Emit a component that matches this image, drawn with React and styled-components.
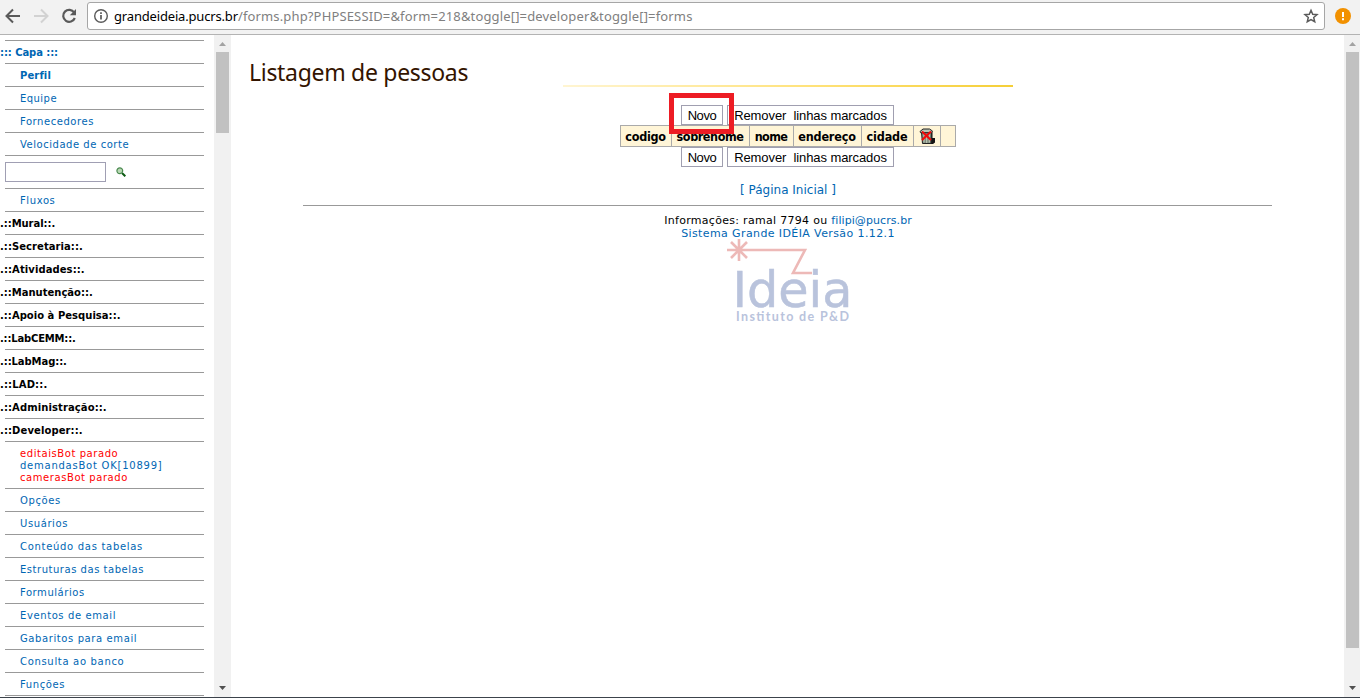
import React from "react";
import styled, { createGlobalStyle } from "styled-components";

const Global = createGlobalStyle`
  * { box-sizing: border-box; }
  html, body, #root { margin: 0; height: 100%; }
  body { overflow: hidden; background: #fff; color: #000; font-family: "DejaVu Sans", sans-serif; }
`;
const Page = styled.div`height: 698px; display: flex; flex-direction: column; border-bottom: 1px solid #3c434b;`;
const Toolbar = styled.header`
  height: 35px; flex: none; display: flex; align-items: center; background: #f2f2f2;
  border-bottom: 1px solid #b3b3b3; padding: 0 8px 2px 3px;
`;
const NavIcon = styled.svg`width: 20px; height: 20px; margin-right: 8px; flex: none; fill: none; stroke: ${(p) => p.$color || "#5a5a5a"}; stroke-width: 2;`;
const Badge = styled.svg`width: ${(p) => p.$s}px; height: ${(p) => p.$s}px; flex: none;`;
const Address = styled.div`
  width: 1238px; height: 28px; margin-right: 10px; display: flex; align-items: center; flex: none;
  border: 1px solid #a6a6a6; border-radius: 3px; background: #fff; padding: 0 5px 0 5px; white-space: pre;
`;
const Url = styled.span`
  flex: 1; margin-left: 5px; color: #808080; font: 13px/20px "Noto Sans", sans-serif; letter-spacing: 0.15px;
`;
const Host = styled.span`color: #000; letter-spacing: -0.17px;`;
const Frames = styled.div`flex: 1; min-height: 0; display: flex;`;
const Sidebar = styled.nav`width: 214px; overflow: hidden; padding: 5px 10px 0 5px;`;
const Item = styled.div`
  height: ${(p) => p.$h || 23}px; display: flex; flex-direction: column; justify-content: center;
  border-bottom: 1px solid #999; padding: 2px 0 0 ${(p) => (p.$root ? 0 : 15)}px;
  &:first-child { border-top: 1px solid #999; height: 24px; }
`;
const Label = styled.span`
  display: block; width: max-content; white-space: pre; font-size: 10px; line-height: 12px;
  margin-left: ${(p) => (p.$root ? -5 : 0)}px; font-weight: ${(p) => (p.$bold ? 700 : 400)};
  color: ${(p) => p.$color || "#0066b3"}; letter-spacing: ${(p) => p.$track || 0}px;
`;
const SearchRow = styled.div`height: 33px; display: flex; align-items: center; gap: 10px; border-bottom: 1px solid #999;`;
const SearchField = styled.input`width: 101px; height: 20px; border: 1px solid #a09fb3; background: #fff; outline: 0;`;
const Track = styled.div`
  width: ${(p) => p.$w}px; flex: none; background: #f1f1f1; display: flex; flex-direction: column; align-items: center;
  padding: 7px 0 7px; svg { flex: none; }
`;
const Thumb = styled.div`width: 13px; height: ${(p) => p.$h}px; margin: 6px 0 auto; background: #c1c1c1;`;
const Main = styled.main`flex: 1; display: flex; flex-direction: column; align-items: center;`;
const Title = styled.h1`
  align-self: flex-start; margin: 21px 0 0 18px; color: #331400; font: 400 23px/32px "Noto Sans", sans-serif;
  height: 29px; white-space: pre; letter-spacing: -0.3px;
`;
const Accent = styled.div`width: 450px; height: 2px; background: linear-gradient(90deg, #fff5d2, #ffe27a 55%, #f5cf38);`;
const Actions = styled.div`height: 20px; display: flex; gap: 4px; margin-top: ${(p) => p.$top || 0}px; position: relative;`;
const Button = styled.button`
  width: ${(p) => p.$w}px; height: 20px; padding: 2px 0 0; border: 1px solid #a09fb0; background: #fff; white-space: pre;
  font: 13px/16px "Liberation Sans", sans-serif; color: #000; letter-spacing: ${(p) => p.$track}px;
`;
const Highlight = styled.div`position: absolute; z-index: 2; left: -12px; top: -12px; width: 65px; height: 41px; border: 5px solid #ed1c24;`;
const Grid = styled.div`display: flex; height: 22px; border: solid #aaa; border-width: 1px 0 1px 1px;`;
const Cell = styled.div`
  width: ${(p) => p.$w}px; border-right: 1px solid #aaa; background: #fff5d7; display: flex; align-items: center; justify-content: center;
  padding-top: ${(p) => (p.$icon ? 0 : 1)}px;
  font: bold 12.5px/19px "DejaVu Sans Condensed", "DejaVu Sans", sans-serif; letter-spacing: ${(p) => p.$track || 0}px;
`;
const Home = styled.a`margin: 15px 0 0 1px; font-size: 12px; line-height: 17px; color: #0066b3;`;
const Rule = styled.div`width: 969px; height: 1px; margin: 6px 0 8px; background: #999;`;
const Info = styled.div`margin-left: 1px; font-size: 11px; line-height: 13px; white-space: pre; color: ${(p) => p.$color || "#000"}; letter-spacing: ${(p) => p.$track || 0}px;`;
const Link = styled.a`color: #0066b3; letter-spacing: 0.08px;`;
const Logo = styled.svg`width: 127px; height: 88px; margin-top: -3px;`;

const Arrow = ({ down }) => (
  <svg width="7" height="4" viewBox="0 0 7 4"><path d={down ? "M0 0h7L3.500 4z" : "M0 4h7L3.500 0z"} fill={down ? "#505050" : "#a3a3a3"} /></svg>
);
const Scrollbar = ({ w, h }) => <Track $w={w}><Arrow /><Thumb $h={h} /><Arrow down /></Track>;

const Trash = () => (
  <Badge $s={18} viewBox="0 0 18 18">
    <path d="M12 5h2.500v6H17v4.500l-2 1.500H6l6-2z" fill="#151515" />
    <path d="M3.500 5.500h10L13 16.500H4.500z" fill="#7f8b7b" stroke="#222" />
    <path d="M2 4.500 5 2h6.500l3 2-1 1.700H2.500z" fill="#b9c3b2" stroke="#222" />
    <path d="M6 7v8.500M8.700 7v9M11.300 7v8.500" stroke="#c3ccbc" />
    <path d="M4 4.500l9 8.500M13 4.500l-9 8.500" stroke="#f00b0b" strokeWidth="2.100" />
  </Badge>
);

const people = [["codigo", 51, -0.3], ["sobrenome", 78, -0.43], ["nome", 44, -0.6], ["endereço", 68, -0.17], ["cidade", 52, -0.12]];
const top = [["Equipe", 0.45], ["Fornecedores", 0.55], ["Velocidade de corte", 0.53]];
const sections = [
  ["Mural", -0.05], ["Secretaria", 0.06], ["Atividades", 0.09], ["Manutenção", 0], ["Apoio à Pesquisa", 0.03],
  ["LabCEMM", -0.18], ["LabMag", -0.08], ["LAD", 0.15], ["Administração", 0.1], ["Developer", 0.1],
];
const tools = [
  ["Opções", 0.6], ["Usuários", 0.6], ["Conteúdo das tabelas", 0.7], ["Estruturas das tabelas", 0.53], ["Formulários", 0.55],
  ["Eventos de email", 0.6], ["Gabaritos para email", 0.6], ["Consulta ao banco", 0.68], ["Funções", 0.6],
];

export default function App() {
  return (
    <Page>
      <Global />
      <Toolbar>
        <NavIcon viewBox="0 0 20 20"><path d="M17 10H4M10 3.500 3.500 10l6.500 6.500" /></NavIcon>
        <NavIcon viewBox="0 0 20 20" $color="#d2d2d2"><path d="M3 10h13M10 3.500l6.500 6.500-6.500 6.500" /></NavIcon>
        <NavIcon viewBox="0 0 20 20"><path d="M15.200 6.500A6 6 0 1 0 15.800 12" strokeWidth="2.200" /><path d="M17 3v6.200h-6.200z" fill="#5a5a5a" stroke="none" /></NavIcon>
        <Address>
          <Badge $s={16} viewBox="0 0 16 16"><circle cx="8" cy="8" r="6.300" fill="none" stroke="#5a5a5a" strokeWidth="1.400" /><path d="M8 7v4.500M8 4.300v1.700" stroke="#5a5a5a" strokeWidth="1.700" /></Badge>
          <Url><Host>grandeideia.pucrs.br</Host>/forms.php?PHPSESSID=&amp;form=218&amp;toggle[]=developer&amp;toggle[]=forms</Url>
          <Badge $s={16} viewBox="0 0 16 16"><path d="M8 2.300l1.700 4 4.300.4-3.300 2.800 1 4.200L8 11.500l-3.700 2.200 1-4.200L2 6.700l4.300-.4z" fill="none" stroke="#5a5a5a" strokeWidth="1.500" /></Badge>
        </Address>
        <Badge $s={16} viewBox="0 0 16 16"><circle cx="8" cy="8" r="8" fill="#f29100" /><path d="M8 4v5M8 10.200v2" stroke="#fff" strokeWidth="2" /></Badge>
      </Toolbar>
      <Frames>
        <Sidebar>
          <Item $root><Label $root $bold $track={-0.08}>::: Capa :::</Label></Item>
          <Item><Label $bold $track={0.12}>Perfil</Label></Item>
          {top.map(([t, k]) => <Item key={t}><Label $track={k}>{t}</Label></Item>)}
          <SearchRow>
            <SearchField />
            <Badge $s={10} viewBox="0 0 10 10"><path d="M6 6l3.300 3.300" stroke="#0b5a12" strokeWidth="2" /><circle cx="3.800" cy="3.800" r="2.900" fill="#b9d8b5" stroke="#4b8a50" strokeWidth="1.200" /></Badge>
          </SearchRow>
          <Item><Label $track={0.6}>Fluxos</Label></Item>
          {sections.map(([t, k]) => <Item key={t} $root><Label $root $bold $color="#000" $track={k}>{`.::${t}::.`}</Label></Item>)}
          <Item $h={47}>
            <Label $color="#f00" $track={0.57}>editaisBot parado</Label>
            <Label $track={0.76}>demandasBot OK[10899]</Label>
            <Label $color="#f00" $track={0.57}>camerasBot parado</Label>
          </Item>
          {tools.map(([t, k]) => <Item key={t}><Label $track={k}>{t}</Label></Item>)}
        </Sidebar>
        <Scrollbar w={17} h={81} />
        <Main>
          <Title>Listagem de pessoas</Title>
          <Accent />
          <Actions $top={18}>
            <Button $w={42} $track={-0.4}>Novo</Button>
            <Button $w={167} $track={-0.08}>{"Remover  linhas marcados"}</Button>
            <Highlight />
          </Actions>
          <Grid>
            {people.map(([t, w, k]) => <Cell key={t} $w={w} $track={k}>{t}</Cell>)}
            <Cell $w={27} $icon><Trash /></Cell>
            <Cell $w={15} />
          </Grid>
          <Actions>
            <Button $w={42} $track={-0.4}>Novo</Button>
            <Button $w={167} $track={-0.08}>{"Remover  linhas marcados"}</Button>
          </Actions>
          <Home>[ Página Inicial ]</Home>
          <Rule />
          <Info $track={0.3}>Informações: ramal 7794 ou <Link>filipi@pucrs.br</Link></Info>
          <Info $color="#0066b3" $track={0.39}>Sistema Grande IDÉIA Versão 1.12.1</Info>
          <Logo viewBox="0 0 127 88">
            <text x="8.500" y="70" fontFamily="DejaVu Sans" fontSize="49" fill="#b9c3dc" stroke="#b9c3dc" strokeWidth="0.500" textLength="120" lengthAdjust="spacingAndGlyphs">Ideia</text>
            <path d="M3 13H81L69 36H88M15 2v22M7 5l16 16M23 5L7 21" fill="none" stroke="#edb9b7" strokeWidth="2.600" />
            <text x="12" y="83.500" fontFamily="Lato" fontWeight="700" fontSize="12.500" fill="#b9c3dc" textLength="113">Instituto de P&amp;D</text>
          </Logo>
        </Main>
        <Scrollbar w={16} h={596} />
      </Frames>
    </Page>
  );
}
